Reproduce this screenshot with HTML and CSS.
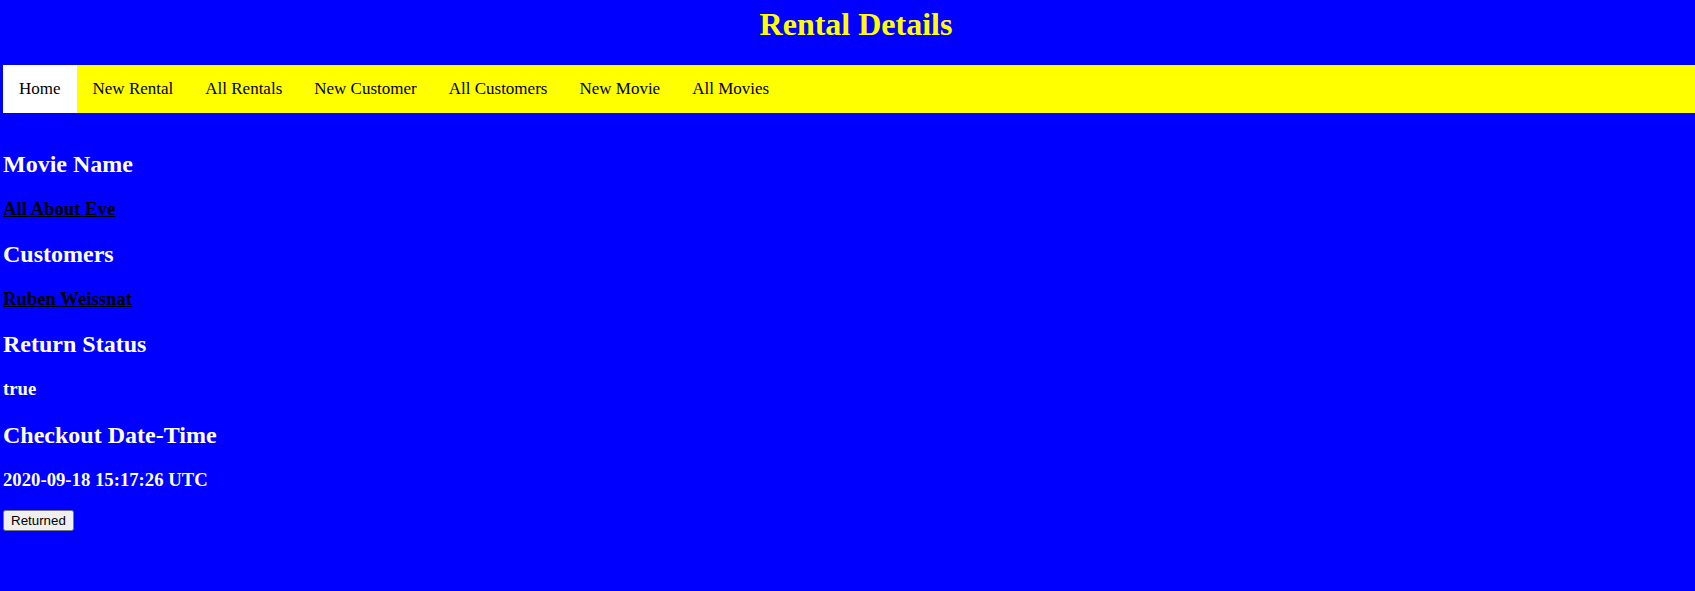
FILE: index.html
```html
<!DOCTYPE html>
<html lang="en">
<head>
<meta charset="utf-8">
<title>Rental Details</title>
<link rel="stylesheet" href="styles.css">
</head>
<body class="page">
  <h1 class="page-title">Rental Details</h1>
  <nav class="topnav">
    <a class="topnav-link is-active" href="#">Home</a>
    <a class="topnav-link" href="#">New Rental</a>
    <a class="topnav-link" href="#">All Rentals</a>
    <a class="topnav-link" href="#">New Customer</a>
    <a class="topnav-link" href="#">All Customers</a>
    <a class="topnav-link" href="#">New Movie</a>
    <a class="topnav-link" href="#">All Movies</a>
  </nav>
  <main class="details">
    <h2 class="label">Movie Name</h2>
    <h3 class="value"><a class="value-link" href="#">All About Eve</a></h3>
    <h2 class="label">Customers</h2>
    <h3 class="value"><a class="value-link" href="#">Ruben Weissnat</a></h3>
    <h2 class="label">Return Status</h2>
    <h3 class="value">true</h3>
    <h2 class="label">Checkout Date-Time</h2>
    <h3 class="value">2020-09-18 15:17:26 UTC</h3>
    <form class="return-form">
      <button class="return-btn" type="button">Returned</button>
    </form>
  </main>
</body>
</html>
```

FILE: styles.css
```css
html {
  background: #0000ff;
}

.page {
  margin: 0 0 0 3px;
  background: #0000ff;
  font-family: "Liberation Serif", "Times New Roman", serif;
  overflow-x: hidden;
}

.page-title {
  margin: 0;
  padding: 6px 0 0 14px;
  margin-bottom: 22px;
  text-align: center;
  color: #ffff00;
  font-size: 32px;
  font-weight: bold;
}

.topnav {
  display: flex;
  background: #ffff00;
  overflow: hidden;
}

.topnav-link {
  display: block;
  padding: 14px 16px;
  font-size: 17px;
  color: #000000;
  text-decoration: none;
}

.topnav-link.is-active {
  background: #ffffff;
}

.details {
  padding-top: 17px;
  color: #ffffff;
}

.label {
  font-size: 24px;
  line-height: 28.2px;
  margin: 19.92px 0;
  font-weight: bold;
}

.value {
  font-size: 18.72px;
  line-height: 22.2px;
  margin: 18.72px 0;
  font-weight: bold;
}

.value-link {
  color: #000000;
  text-decoration: underline;
}

.return-form {
  margin: 0;
}

.return-btn {
  font-family: "Liberation Sans", Arial, sans-serif;
  font-size: 13.3333px;
}
```
